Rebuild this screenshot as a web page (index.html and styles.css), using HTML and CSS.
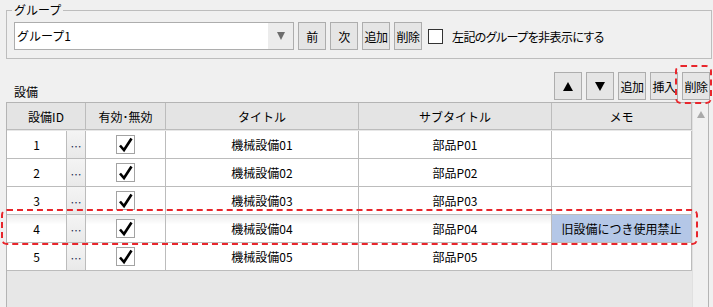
FILE: index.html
```html
<!DOCTYPE html>
<html lang="ja">
<head>
  <meta charset="UTF-8">
  <title>設備</title>
  <link rel="stylesheet" href="styles.css">
</head>
<body>
  <fieldset class="group">
    <legend>グループ</legend>
    <div class="group-row">
      <div class="combo">
        <span class="combo-text">グループ1</span>
        <span class="combo-drop"><span class="tri-down small"></span></span>
      </div>
      <button class="btn">前</button>
      <button class="btn">次</button>
      <button class="btn">追加</button>
      <button class="btn">削除</button>
      <label class="hide-opt"><span class="box"></span>左記のグループを非表示にする</label>
    </div>
  </fieldset>

  <div class="bar">
    <span class="section-title">設備</span>
    <div class="tools">
      <button class="btn"><span class="tri-up"></span></button>
      <button class="btn"><span class="tri-down"></span></button>
      <button class="btn">追加</button>
      <button class="btn">挿入</button>
      <button class="btn">削除</button>
    </div>
  </div>

  <div class="grid">
    <div class="rows">
      <div class="cell head span2">設備ID</div>
      <div class="cell head">有効･無効</div>
      <div class="cell head">タイトル</div>
      <div class="cell head">サブタイトル</div>
      <div class="cell head">メモ</div>

      <div class="cell">1</div>
      <div class="cell dots">…</div>
      <div class="cell"><span class="check"><svg width="17" height="17" viewBox="0 0 17 17"><path d="M3 9.5 L7 14 L14.5 2.5" fill="none" stroke="#000" stroke-width="2.6"/></svg></span></div>
      <div class="cell">機械設備01</div>
      <div class="cell">部品P01</div>
      <div class="cell"></div>

      <div class="cell">2</div>
      <div class="cell dots">…</div>
      <div class="cell"><span class="check"><svg width="17" height="17" viewBox="0 0 17 17"><path d="M3 9.5 L7 14 L14.5 2.5" fill="none" stroke="#000" stroke-width="2.6"/></svg></span></div>
      <div class="cell">機械設備02</div>
      <div class="cell">部品P02</div>
      <div class="cell"></div>

      <div class="cell">3</div>
      <div class="cell dots">…</div>
      <div class="cell"><span class="check"><svg width="17" height="17" viewBox="0 0 17 17"><path d="M3 9.5 L7 14 L14.5 2.5" fill="none" stroke="#000" stroke-width="2.6"/></svg></span></div>
      <div class="cell">機械設備03</div>
      <div class="cell">部品P03</div>
      <div class="cell"></div>

      <div class="cell sel">4</div>
      <div class="cell dots">…</div>
      <div class="cell sel"><span class="check"><svg width="17" height="17" viewBox="0 0 17 17"><path d="M3 9.5 L7 14 L14.5 2.5" fill="none" stroke="#000" stroke-width="2.6"/></svg></span></div>
      <div class="cell sel">機械設備04</div>
      <div class="cell sel">部品P04</div>
      <div class="cell memo-hit">旧設備につき使用禁止</div>

      <div class="cell">5</div>
      <div class="cell dots">…</div>
      <div class="cell"><span class="check"><svg width="17" height="17" viewBox="0 0 17 17"><path d="M3 9.5 L7 14 L14.5 2.5" fill="none" stroke="#000" stroke-width="2.6"/></svg></span></div>
      <div class="cell">機械設備05</div>
      <div class="cell">部品P05</div>
      <div class="cell"></div>
    </div>
    <div class="vscroll"><span class="tri-up faint"></span></div>
  </div>

  <!-- 注記の赤枠 -->
  <div class="mark mark-del"></div>
  <div class="mark mark-row"></div>
</body>
</html>
```

FILE: styles.css
```css
body {
  margin: 0;
  padding-top: 3px;
  position: relative;
  height: 307px;
  box-sizing: border-box;
  overflow: hidden;
  background-color: #f0f0f0;
  color: #000;
  font-family: "Noto Sans CJK JP", "Noto Sans", sans-serif;
  font-size: 12px;
}
.group {
  margin: 0 1px 0 6px;
  padding: 5px 8px 8px 7px;
  border: 1px solid #bdbdbd;
}
.group legend {
  margin-left: -2px;
  padding: 0 2px;
  line-height: 14px;
}
.group-row {
  display: flex;
  align-items: center;
  gap: 4px;
}
.combo {
  display: flex;
  width: 280px;
  height: 28px;
  box-sizing: border-box;
  border: 1px solid #adadad;
  background-color: #fff;
}
.combo-text {
  flex: 1;
  line-height: 26px;
  padding-left: 2px;
}
.combo-drop {
  width: 25px;
  display: flex;
  align-items: center;
  justify-content: center;
  background-color: #ececec;
}
.btn {
  width: 28px;
  height: 28px;
  padding: 0;
  border: 1px solid #adadad;
  background-color: #e5e5e5;
  font-family: inherit;
  font-size: 12px;
  color: #000;
  display: flex;
  align-items: center;
  justify-content: center;
  letter-spacing: -0.5px;
}
.tri-up, .tri-down {
  width: 0;
  height: 0;
  border-left: 5px solid transparent;
  border-right: 5px solid transparent;
}
.tri-up {
  border-bottom: 9px solid #000;
}
.tri-down {
  border-top: 9px solid #000;
}
.tri-down.small {
  border-left-width: 4px;
  border-right-width: 4px;
  border-top: 8px solid #6d6d6d;
}
.tri-up.faint {
  border-left-width: 4px;
  border-right-width: 4px;
  border-bottom: 7px solid #a9a9a9;
}
.hide-opt {
  display: flex;
  align-items: center;
  margin-left: 2px;
  font-feature-settings: "palt";
  letter-spacing: -0.6px;
}
.hide-opt .box {
  width: 13px;
  height: 13px;
  border: 1px solid #333;
  background-color: #fff;
  margin-right: 9px;
}
.bar {
  display: flex;
  justify-content: space-between;
  align-items: flex-end;
  margin: 13px 3px 0 14px;
}
.section-title {
  line-height: 14px;
  margin-bottom: 1px;
}
.tools {
  display: flex;
  gap: 4px;
}
.grid {
  display: flex;
  margin: 2px 4px 0 6px;
  height: 205px;
  border: 1px solid #b4b4b4;
  border-bottom: none;
  background-color: #e7e7e7;
}
.rows {
  display: grid;
  grid-template-columns: 60px 19px 80px 193px 193px 140px;
  grid-auto-rows: 28px;
  align-content: start;
}
.cell {
  box-sizing: border-box;
  border-right: 1px solid #bcbcbc;
  border-bottom: 1px solid #bcbcbc;
  background-color: #fff;
  display: flex;
  align-items: center;
  justify-content: center;
}
.cell.head {
  height: 27px;
  background-color: #e4e4e4;
}
.cell.span2 {
  grid-column: span 2;
}
.cell.dots {
  background: linear-gradient(#f4f4f4, #e9e9e9);
  color: #1b2b50;
  font-size: 11px;
  padding-top: 3px;
}
.cell.sel {
  background: linear-gradient(#ececec, #fff 35%);
}
.cell.memo-hit {
  background-color: #b4c7e7;
}
.check {
  width: 17px;
  height: 17px;
  border: 1px solid #a3a3a3;
  background-color: #fff;
}
.check svg {
  display: block;
}
.vscroll {
  flex: 1;
  border-left: 1px solid #e0e0e0;
  background-color: #f0f0f0;
  display: flex;
  justify-content: center;
  padding-top: 8px;
  box-sizing: border-box;
  align-items: flex-start;
}
.mark {
  position: absolute;
  border: 2px dashed #e8262c;
  border-radius: 6px;
  box-sizing: border-box;
}
.mark-del {
  left: 675px;
  top: 65px;
  width: 37px;
  height: 39px;
}
.mark-row {
  left: 1px;
  top: 209px;
  width: 697px;
  height: 36px;
}
```
